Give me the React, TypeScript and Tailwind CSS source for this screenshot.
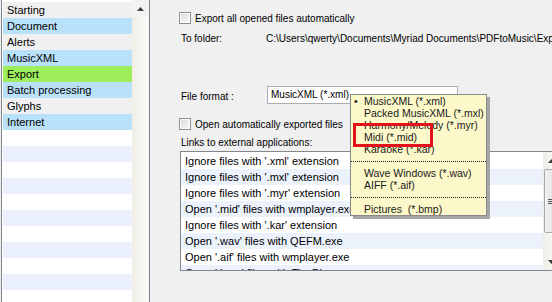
import React from 'react';

const SIDEBAR_ITEMS: { label: string; bg: string }[] = [
  { label: 'Starting', bg: 'bg-[#f0f0f0]' },
  { label: 'Document', bg: 'bg-[#b9e1f9]' },
  { label: 'Alerts', bg: 'bg-[#f0f0f0]' },
  { label: 'MusicXML', bg: 'bg-[#b9e1f9]' },
  { label: 'Export', bg: 'bg-[#9ded5c]' },
  { label: 'Batch processing', bg: 'bg-[#b9e1f9]' },
  { label: 'Glyphs', bg: 'bg-[#f0f0f0]' },
  { label: 'Internet', bg: 'bg-[#b9e1f9]' },
];

const LINKS = [
  "Ignore files with '.xml' extension",
  "Ignore files with '.mxl' extension",
  "Ignore files with '.myr' extension",
  "Open '.mid' files with wmplayer.exe",
  "Ignore files with '.kar' extension",
  "Open '.wav' files with QEFM.exe",
  "Open '.aif' files with wmplayer.exe",
  "Open '.bmp' files with TinyPic.exe",
];

const FORMAT_GROUPS = [
  ['MusicXML (*.xml)', 'Packed MusicXML (*.mxl)', 'Harmony/Melody (*.myr)', 'Midi (*.mid)', 'Karaoke (*.kar)'],
  ['Wave Windows (*.wav)', 'AIFF (*.aif)'],
  ['Pictures  (*.bmp)'],
];

function Checkbox() {
  return (
    <div className="w-[12px] h-[12px] border border-[#8e8f8f] bg-white p-px shrink-0">
      <div className="w-full h-full bg-gradient-to-br from-[#dcdcdc] to-[#f8f8f8]" />
    </div>
  );
}

function Arrow({ down }: { down?: boolean }) {
  return (
    <svg width="7" height="4" viewBox="0 0 7 4">
      <path d={down ? 'M0 0 H7 L3.5 4 Z' : 'M0 4 H7 L3.5 0 Z'} fill="#3c3c3c" />
    </svg>
  );
}

export default function App() {
  const emptyRows = Array.from({ length: 12 });

  return (
    <div className="relative w-[552px] h-[302px] overflow-hidden flex bg-[#f0f0f0] text-[11px] text-black font-['Liberation_Sans',Arial,sans-serif]">
      {/* left category list */}
      <div className="ml-px w-[149px] h-[320px] flex border-l border-r border-[#7f858c] bg-white shrink-0">
        <div className="w-[1px]" />
        <div className="w-[129px] pt-[2px]">
          {SIDEBAR_ITEMS.map((it) => (
            <div key={it.label} className={`h-[16px] leading-[16px] pl-[4px] ${it.bg}`}>
              {it.label}
            </div>
          ))}
          {emptyRows.map((_, i) => (
            <div key={i} className={`h-[16px] ${i % 2 === 1 ? 'bg-[#ebf1fc]' : 'bg-white'}`} />
          ))}
        </div>
        <div className="w-[16px] flex flex-col bg-gradient-to-r from-[#efede5] to-[#fdfdfb]">
          <div className="h-[17px] flex items-center justify-center bg-[#f3f3f3]">
            <Arrow />
          </div>
        </div>
        <div className="w-[1px] bg-[#f4f4f4]" />
      </div>

      {/* export settings */}
      <div className="flex-1 min-w-0 overflow-hidden pl-[29px] pt-[12px]">
        <div className="h-[12px] flex items-center gap-[4px] whitespace-nowrap text-[10px]">
          <Checkbox />
          <span>Export all opened files automatically</span>
        </div>

        <div className="mt-[7px] h-[14px] flex items-center pl-[2px] whitespace-nowrap text-[10px]">
          <span className="w-[85px] shrink-0">To folder:</span>
          <span>C:\Users\qwerty\Documents\Myriad Documents\PDFtoMusic\Export</span>
        </div>

        <div className="mt-[41px] h-[18px] flex items-center pl-[2px] whitespace-nowrap text-[10px]">
          <span className="w-[86px] shrink-0 pt-[2px]">File format :</span>
          <div className="w-[191px] h-[18px] border border-[#abadb3] bg-white pl-[3px] leading-[16px]">
            MusicXML (*.xml)
          </div>
        </div>

        <div className="mt-[14px] h-[12px] flex items-center gap-[4px] whitespace-nowrap text-[10px]">
          <Checkbox />
          <span>Open automatically exported files</span>
        </div>

        <div className="mt-[6px] h-[14px] leading-[14px] pl-[2px] whitespace-nowrap text-[10px]">
          Links to external applications:
        </div>

        <div className="mt-[1px] ml-px w-[381px] h-[120px] border border-[#828790] bg-white flex overflow-hidden">
          <div className="flex-1 pt-px">
            {LINKS.map((l, i) => (
              <div
                key={l}
                className={`h-[16px] leading-[16px] pl-[4px] whitespace-nowrap ${i % 2 === 1 ? 'bg-[#ebf2fc]' : 'bg-white'}`}
              >
                {l}
              </div>
            ))}
          </div>
          <div className="w-[17px] flex flex-col bg-gradient-to-r from-[#efede5] to-[#fdfdfb]">
            <div className="h-[17px] flex items-center justify-center">
              <Arrow />
            </div>
            <div className="h-[64px] mx-px rounded-[2px] border border-[#a8a8a8] bg-gradient-to-r from-[#f2f2f2] to-[#dcdcdc] flex flex-col items-center justify-center gap-px">
              <div className="w-[7px] h-px bg-[#555]" />
              <div className="w-[7px] h-px bg-[#555]" />
              <div className="w-[7px] h-px bg-[#555]" />
            </div>
            <div className="flex-1" />
            <div className="h-[17px] flex items-center justify-center">
              <Arrow down />
            </div>
          </div>
        </div>
      </div>

      {/* open format menu */}
      <div className="absolute left-[350px] top-[94px] w-[140px] h-[125px] flex flex-col">
        <div className="flex-1 flex">
          <div className="flex-1 border border-[#8a8a8a] bg-[#fcf8c9] font-['Liberation_Sans',Arial,sans-serif] text-[10.5px] text-[#1a1a1a]">
            {FORMAT_GROUPS.map((g, gi) => (
              <div key={gi}>
                {gi > 0 && <div className="h-[12px] flex items-center"><div className="w-full border-t border-dotted border-[#222]" /></div>}
                {g.map((f, fi) => (
                  <div key={f} className="h-[12px] leading-[12px] flex whitespace-pre">
                    <span className="w-[13px] pl-[3px]">{gi === 0 && fi === 0 ? '•' : ''}</span>
                    <span>{f}</span>
                  </div>
                ))}
              </div>
            ))}
          </div>
          <div className="w-[3px] mt-[3px] bg-[#a6a6a6]" />
        </div>
        <div className="h-[3px] ml-[3px] bg-[#a6a6a6]" />
      </div>

      {/* highlight marker */}
      <div className="absolute left-[353px] top-[123px] w-[80px] h-[24px] border-[3px] border-[#e3131b]" />
    </div>
  );
}
